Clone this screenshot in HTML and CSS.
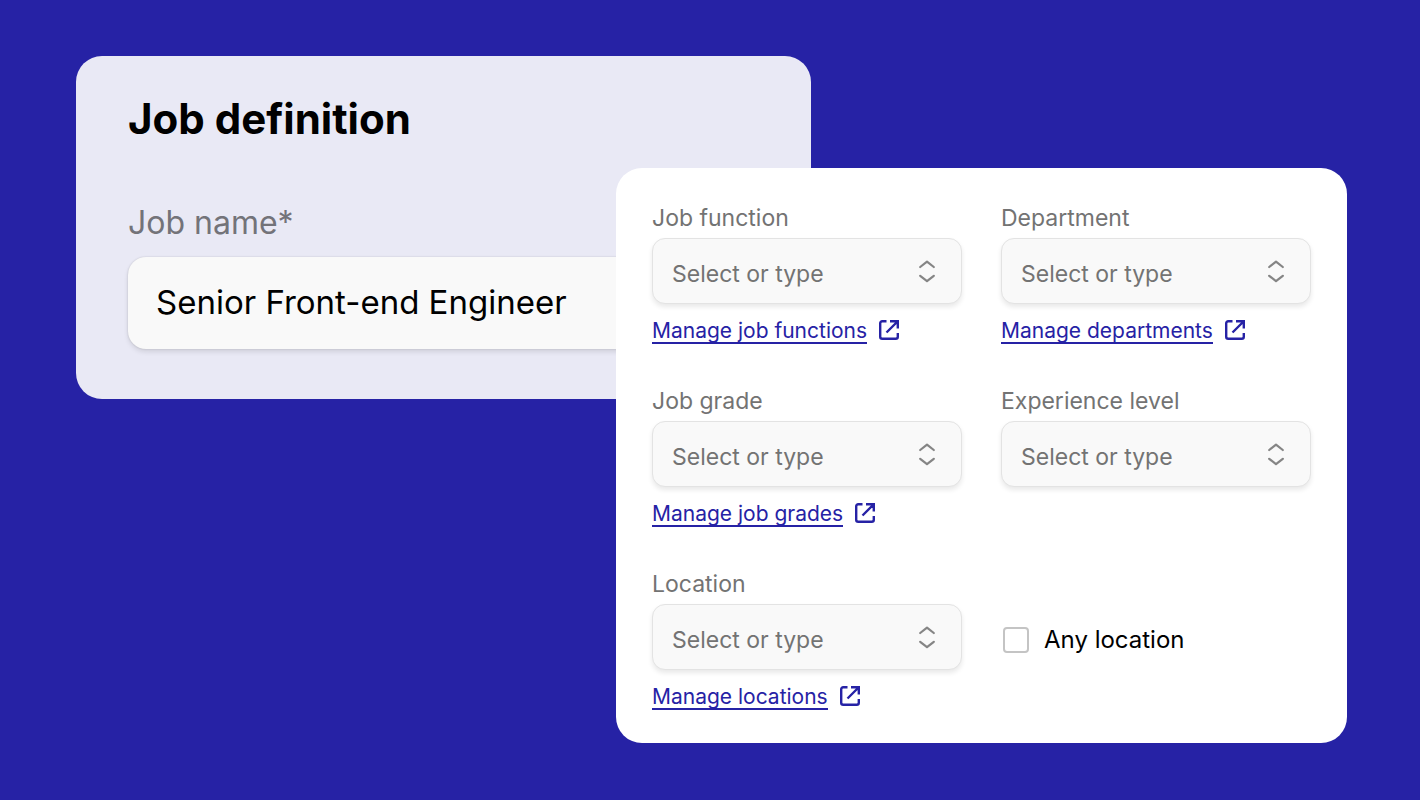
FILE: index.html
```html
<!DOCTYPE html>
<html lang="en">
<head>
<meta charset="utf-8">
<meta name="viewport" content="width=device-width, initial-scale=1">
<title>Job definition</title>
<link rel="stylesheet" href="styles.css">
</head>
<body>
<svg class="sprite" aria-hidden="true">
  <symbol id="chevrons" viewBox="0 0 18 24">
    <path d="M2.200 8 9 2.600 15.800 8M2.200 16.800 9 22.200 15.800 16.800" fill="none" stroke="currentColor" stroke-width="2.200" stroke-linecap="round" stroke-linejoin="round"/>
  </symbol>
  <symbol id="external" viewBox="0 0 20 20">
    <path d="M7.500 1.200H3.200a2 2 0 0 0-2 2v13.600a2 2 0 0 0 2 2h13.600a2 2 0 0 0 2-2V13M11 1.200H18.800V8.500M18.500 1.500 7.500 12.500" fill="none" stroke="currentColor" stroke-width="2.400"/>
  </symbol>
</svg>
<main class="stage">
  <section class="card definition">
    <h1 class="title">Job definition</h1>
    <label class="name-label" for="job-name">Job name*</label>
    <input class="name-input" id="job-name" type="text" value="Senior Front-end Engineer">
  </section>
  <form class="card details">
    <div class="field">
      <label class="label" for="function">Job function</label>
      <div class="picker">
        <select class="select" id="function"><option>Select or type</option></select>
        <svg class="chevrons" aria-hidden="true"><use href="#chevrons"/></svg>
      </div>
      <a class="manage" href="#functions"><span class="manage-text">Manage job functions</span><svg class="external" aria-hidden="true"><use href="#external"/></svg></a>
    </div>
    <div class="field">
      <label class="label" for="department">Department</label>
      <div class="picker">
        <select class="select" id="department"><option>Select or type</option></select>
        <svg class="chevrons" aria-hidden="true"><use href="#chevrons"/></svg>
      </div>
      <a class="manage" href="#departments"><span class="manage-text">Manage departments</span><svg class="external" aria-hidden="true"><use href="#external"/></svg></a>
    </div>
    <div class="field">
      <label class="label" for="grade">Job grade</label>
      <div class="picker">
        <select class="select" id="grade"><option>Select or type</option></select>
        <svg class="chevrons" aria-hidden="true"><use href="#chevrons"/></svg>
      </div>
      <a class="manage" href="#grades"><span class="manage-text">Manage job grades</span><svg class="external" aria-hidden="true"><use href="#external"/></svg></a>
    </div>
    <div class="field">
      <label class="label" for="level">Experience level</label>
      <div class="picker">
        <select class="select" id="level"><option>Select or type</option></select>
        <svg class="chevrons" aria-hidden="true"><use href="#chevrons"/></svg>
      </div>
    </div>
    <div class="field">
      <label class="label" for="location">Location</label>
      <div class="picker">
        <select class="select" id="location"><option>Select or type</option></select>
        <svg class="chevrons" aria-hidden="true"><use href="#chevrons"/></svg>
      </div>
      <a class="manage" href="#locations"><span class="manage-text">Manage locations</span><svg class="external" aria-hidden="true"><use href="#external"/></svg></a>
    </div>
    <label class="any"><input class="check" type="checkbox">Any location</label>
  </form>
</main>
</body>
</html>
```
FILE: styles.css
```css
* { box-sizing: border-box; }

body {
  margin: 0;
  min-height: 100vh;
  background: #2622a5;
  color: #000;
  font-family: Inter, "Liberation Sans", sans-serif;
}

.sprite { display: none; }

/* The two cards share the middle column and row, so the second overlaps the first. */
.stage {
  display: grid;
  grid-template-columns: 540fr 195fr 536fr;
  grid-template-rows: 112px auto auto;
  padding: 56px 73px 56px 76px;
}

.card { border-radius: 26px; }

.definition {
  grid-area: 1 / 1 / 3 / 3;
  align-self: start;
  display: flex;
  flex-direction: column;
  padding: 36px 52px 50px;
  background: #e9e9f5;
}

.title {
  margin: 0 0 58px;
  font-size: 42px;
  line-height: 53px;
  font-weight: 700;
}

.name-label {
  margin-bottom: 14px;
  color: #737379;
  font-size: 32px;
  line-height: 40px;
}

.name-input {
  width: 100%;
  height: 92px;
  padding: 0 28px 2px;
  border: 0;
  border-radius: 18px;
  background: #f9f9f9;
  box-shadow: 0 0 2px rgba(0, 0, 0, 0.16), 0 3px 5px rgba(0, 0, 0, 0.1);
  color: #000;
  font: 33px/40px Inter, "Liberation Sans", sans-serif;
}

.details {
  grid-area: 2 / 2 / 4 / 4;
  display: grid;
  grid-template-columns: 1fr 1fr;
  gap: 43px 39px;
  padding: 36px 36px 33px;
  background: #fff;
}

.field {
  display: flex;
  flex-direction: column;
  align-items: flex-start;
}

.label {
  margin-bottom: 6px;
  color: #737373;
  font-size: 23px;
  line-height: 28px;
}

.picker {
  display: grid;
  width: 100%;
  align-items: center;
}

.select {
  grid-area: 1 / 1;
  width: 100%;
  height: 66px;
  padding: 5px 56px 0 19px;
  border: 1px solid #e3e3e3;
  border-radius: 13px;
  background: #f9f9f9;
  box-shadow: 0 3px 5px rgba(0, 0, 0, 0.09);
  color: #737373;
  font: 23px/28px Inter, "Liberation Sans", sans-serif;
  appearance: none;
}

.chevrons {
  grid-area: 1 / 1;
  justify-self: end;
  width: 18px;
  height: 24px;
  margin-right: 26px;
  color: #858585;
  pointer-events: none;
}

.manage {
  display: flex;
  align-items: center;
  gap: 12px;
  margin-top: 16px;
  color: #2622a5;
  font-size: 21px;
  line-height: 22px;
  text-decoration: none;
}

.manage-text { border-bottom: 2px solid #2622a5; }

.external {
  width: 20px;
  height: 20px;
  margin-bottom: 4px;
}

.any {
  display: flex;
  align-items: center;
  align-self: center;
  gap: 15px;
  padding-left: 2px;
  font-size: 24px;
  line-height: 30px;
}

.check {
  width: 26px;
  height: 26px;
  margin: 0;
  border: 2px solid #c4c4c4;
  border-radius: 4px;
  background: #fff;
  appearance: none;
}

.check:checked { background: #2622a5; }
```
